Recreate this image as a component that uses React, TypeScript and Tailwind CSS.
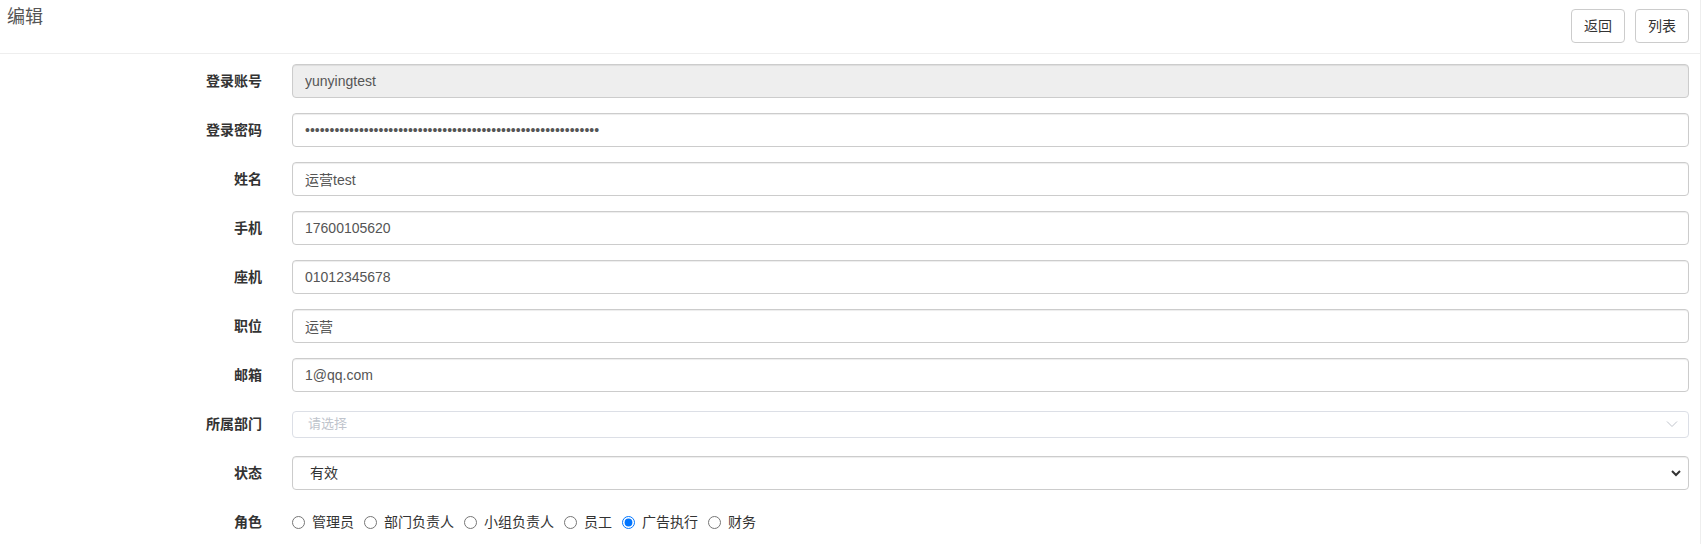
import React from "react";

const font = { fontFamily: '"Liberation Sans", "Noto Sans CJK SC", sans-serif' };

function Row({ label, children }: { label: string; children: React.ReactNode }) {
  return (
    <div className="flex items-center h-[34px]">
      <div className="w-[262px] shrink-0 text-right text-[14px] font-bold text-[#333]">{label}</div>
      <div className="ml-[30px] flex-1 mr-[11px] flex items-center h-full">{children}</div>
    </div>
  );
}

const inputCls =
  "w-full h-[34px] px-3 border border-[#ccc] rounded-[4px] text-[14px] text-[#555] bg-white outline-none shadow-[inset_0_1px_1px_rgba(0,0,0,0.075)]";

const roles = [
  { name: "管理员", checked: false },
  { name: "部门负责人", checked: false },
  { name: "小组负责人", checked: false },
  { name: "员工", checked: false },
  { name: "广告执行", checked: true },
  { name: "财务", checked: false },
];

export default function App() {
  const pwd = "$2y$10$abcdefghijklmnopqrstuvwxyzABCDEFGHIJKLMNOPQRSTUVWXYZ0";
  return (
    <div className="w-full h-[544px] bg-white border-r border-[#eee] overflow-hidden" style={font}>
      <div className="h-[54px] border-b border-[#eee] flex items-start justify-between">
        <div className="pl-[7px] pt-[4px] text-[18px] text-[#555] leading-[26px]">编辑</div>
        <div className="flex gap-[10px] pt-[9px] pr-[11px]">
          <button className="h-[34px] px-[12px] border border-[#ccc] rounded-[4px] bg-white text-[14px] text-[#333]">返回</button>
          <button className="h-[34px] px-[12px] border border-[#ccc] rounded-[4px] bg-white text-[14px] text-[#333]">列表</button>
        </div>
      </div>
      <div className="pt-[10px] flex flex-col gap-[15px]">
        <Row label="登录账号">
          <input className={inputCls + " !bg-[#eee]"} readOnly value="yunyingtest" />
        </Row>
        <Row label="登录密码">
          <input className={inputCls} type="password" readOnly value={pwd} />
        </Row>
        <Row label="姓名">
          <input className={inputCls} readOnly value="运营test" />
        </Row>
        <Row label="手机">
          <input className={inputCls} readOnly value="17600105620" />
        </Row>
        <Row label="座机">
          <input className={inputCls} readOnly value="01012345678" />
        </Row>
        <Row label="职位">
          <input className={inputCls} readOnly value="运营" />
        </Row>
        <Row label="邮箱">
          <input className={inputCls} readOnly value="1@qq.com" />
        </Row>
        <Row label="所属部门">
          <div className="w-full h-[27px] border border-[#dcdfe6] rounded-[4px] flex items-center justify-between pl-[15px] pr-[10px]">
            <span className="text-[13px] text-[#c0c4cc]">请选择</span>
            <svg width="12" height="8" viewBox="0 0 12 8" fill="none">
              <path d="M1 1.5 L6 6.5 L11 1.5" stroke="#c0c4cc" strokeWidth="1" />
            </svg>
          </div>
        </Row>
        <Row label="状态">
          <div className="relative w-full h-[34px] border border-[#ccc] rounded-[4px] flex items-center justify-between pl-[17px] pr-[6px] shadow-[inset_0_1px_1px_rgba(0,0,0,0.075)]">
            <span className="text-[14px] text-[#333]">有效</span>
            <svg width="12" height="8" viewBox="0 0 12 8" fill="none">
              <path d="M2 2 L6 6 L10 2" stroke="#333" strokeWidth="2" />
            </svg>
          </div>
        </Row>
        <Row label="角色">
          <div className="flex items-center text-[14px] text-[#333]">
            {roles.map((r) => (
              <label key={r.name} className="flex items-center mr-[10px]">
                <input type="radio" name="role" defaultChecked={r.checked} className="m-0 w-[13px] h-[13px] mr-[7px]" />
                <span>{r.name}</span>
              </label>
            ))}
          </div>
        </Row>
      </div>
    </div>
  );
}
